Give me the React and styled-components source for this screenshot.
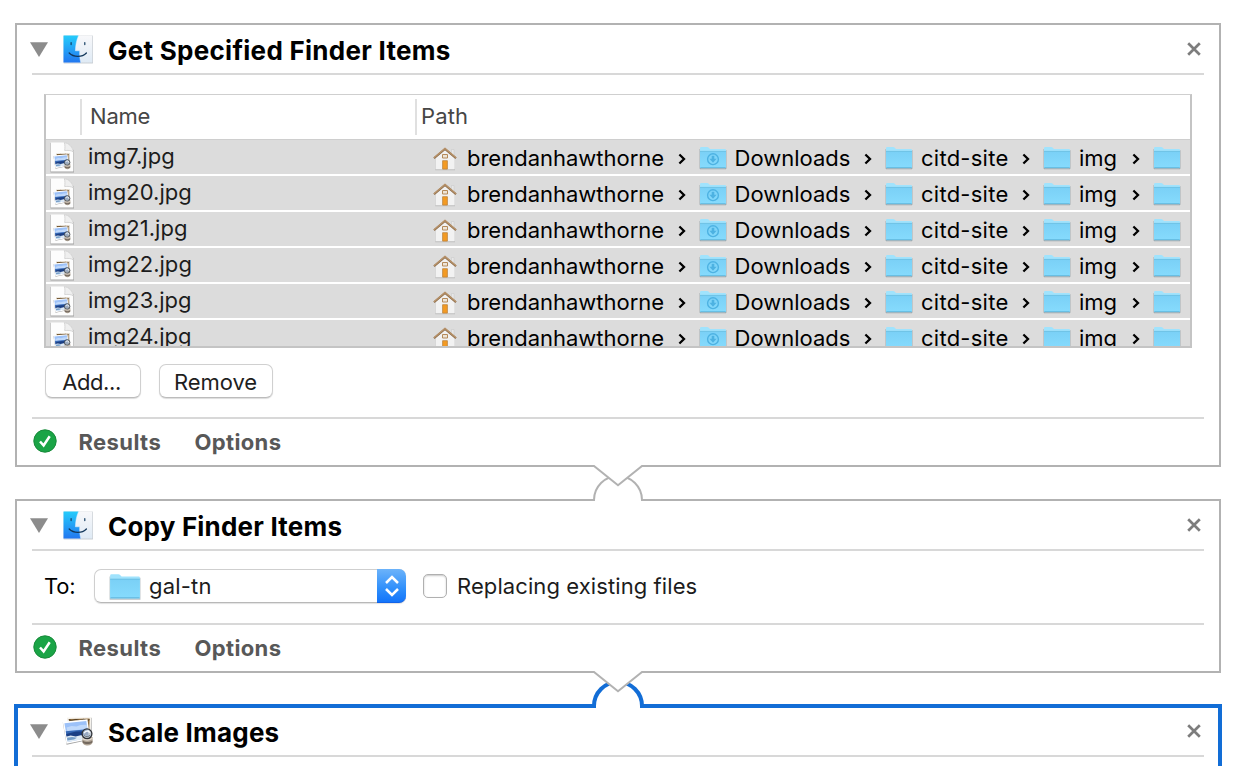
import React from "react";
import styled, { createGlobalStyle } from "styled-components";

const GlobalStyle = createGlobalStyle`
  * { box-sizing: border-box; }
  body {
    margin: 0;
    background: #fff;
    overflow: hidden;
    font-family: Inter, "Liberation Sans", sans-serif;
    font-size: 22px;
    color: #000;
  }
`;

const Workflow = styled.main`
  width: 1236px;
  height: 766px;
  overflow: hidden;
  padding: 23px 15px 0;
  display: flex;
  flex-direction: column;
  gap: 32px;
`;

const Card = styled.section`
  position: relative;
  flex: none;
  height: ${(p) => p.$height}px;
  background: #fff;
  border: ${(p) => (p.$selected ? "4px solid #126dd6" : "2px solid #b2b2b2")};
  margin: ${(p) => (p.$selected ? "-1px -1px 0" : "0")};
  padding: 0 ${(p) => (p.$selected ? 14 : 15)}px;
  display: flex;
  flex-direction: column;
`;

const Header = styled.header`
  flex: none;
  height: ${(p) => (p.$selected ? 49 : 50)}px;
  border-bottom: 2px solid #d8d8d8;
  display: flex;
  align-items: flex-start;
  padding: ${(p) => (p.$selected ? 9 : 10)}px 3px 0 0;
`;

const Disclosure = styled.svg`
  flex: none;
  width: 19px;
  height: 16px;
  margin: 7px 13px 0 -2px;
`;

const HeaderIcon = styled.svg`
  flex: none;
  width: 32px;
  height: 30px;
  overflow: visible;
`;

const Title = styled.h2`
  flex: 1;
  margin: 0 0 0 14px;
  font-size: 26px;
  font-weight: 700;
  line-height: 32px;
  letter-spacing: ${(p) => p.$spacing}px;
  white-space: nowrap;
`;

const CloseIcon = styled.svg`
  flex: none;
  width: 14px;
  height: 14px;
  margin-top: 7px;
`;

const Table = styled.div`
  flex: none;
  width: 1148px;
  height: 254px;
  margin: 19px 0 0 12px;
  border: 2px solid #c4c4c4;
  border-top: 1px solid #cfcfcf;
  overflow: hidden;
`;

const TableHead = styled.div`
  height: 45px;
  border-bottom: 1px solid #cecece;
  padding-top: 4px;
  display: grid;
  grid-template-columns: 34px 335px 1fr;
`;

const HeadCell = styled.div`
  height: 36px;
  line-height: 35px;
  padding-left: ${(p) => p.$inset}px;
  color: #464646;
  letter-spacing: ${(p) => p.$spacing}px;
  border-left: ${(p) => (p.$divided ? "2px solid #e0e0e0" : "none")};
`;

const Row = styled.div`
  height: 36px;
  background: #dcdcdc;
  border-bottom: 2px solid #fff;
  display: grid;
  grid-template-columns: 42px 345px 1fr;
`;

const FileIcon = styled.svg`
  width: 26px;
  height: 32px;
  margin: 1px 0 0 3px;
  overflow: visible;
`;

const FileName = styled.span`
  line-height: 33px;
  color: #1c1c1c;
  letter-spacing: 0.04px;
`;

const Path = styled.div`
  display: grid;
  grid-template-columns: 266px 186px 158px 110px 37px;
  overflow: hidden;
`;

const Segment = styled.div`
  display: flex;
  align-items: flex-start;
  padding-right: ${(p) => (p.$last ? 0 : 13)}px;
`;

const SegmentIcon = styled.svg`
  flex: none;
  width: 28px;
  height: 26px;
  margin-top: 6px;
  overflow: visible;
`;

const SegmentName = styled.span`
  margin-left: ${(p) => p.$gap}px;
  line-height: 37px;
  white-space: nowrap;
  letter-spacing: ${(p) => p.$spacing}px;
`;

const Chevron = styled.svg`
  flex: none;
  width: 8px;
  height: 12px;
  margin: 13px 0 0 auto;
`;

const Buttons = styled.div`
  display: flex;
  gap: 18px;
  margin: 16px 0 0 13px;
`;

const Button = styled.button`
  width: ${(p) => p.$width}px;
  height: 34px;
  padding: 0 ${(p) => p.$trim || 0}px 0 0;
  border: 1px solid #d0d0d0;
  border-bottom-color: #bcbcbc;
  border-radius: 7px;
  background: #fff;
  box-shadow: 0 1px 1px rgba(0, 0, 0, 0.14);
  font: inherit;
  line-height: 34px;
  color: #1e1e1e;
  letter-spacing: ${(p) => p.$spacing}px;
`;

const Footer = styled.footer`
  flex: none;
  height: 48px;
  margin-top: auto;
  border-top: 2px solid #d8d8d8;
  display: flex;
  align-items: flex-start;
  padding: 10px 0 0 1px;
`;

const Check = styled.svg`
  flex: none;
  width: 24px;
  height: 24px;
`;

const FooterTab = styled.span`
  width: ${(p) => p.$width}px;
  margin-left: ${(p) => p.$gap}px;
  line-height: 27px;
  font-weight: 700;
  color: #585858;
  letter-spacing: ${(p) => p.$spacing}px;
`;

const Settings = styled.div`
  display: flex;
  align-items: center;
  height: 34px;
  margin: 18px 0 0 12px;
`;

const Label = styled.label`
  width: ${(p) => p.$width}px;
  line-height: 34px;
  color: ${(p) => p.$color};
  letter-spacing: ${(p) => p.$spacing}px;
  white-space: nowrap;
`;

const Select = styled.div`
  width: 312px;
  height: 34px;
  border: 1px solid #cfcfcf;
  border-right: 0;
  border-bottom-color: #b8b8b8;
  border-radius: 7px;
  box-shadow: 0 1px 1px rgba(0, 0, 0, 0.12);
  display: flex;
  align-items: center;
  padding-left: 14px;
`;

const SelectFolder = styled.svg`
  width: 32px;
  height: 27px;
  overflow: visible;
`;

const SelectValue = styled.span`
  flex: 1;
  margin-left: 8px;
  color: #1c1c1c;
  letter-spacing: 0.2px;
`;

const Stepper = styled.div`
  width: 29px;
  height: 34px;
  border-radius: 0 7px 7px 0;
  background: linear-gradient(#6cb3fa, #2f8ffb 60%, #1374fa);
  border-bottom: 1px solid #1263e8;
  display: flex;
  align-items: center;
  justify-content: center;
`;

const Checkbox = styled.span`
  width: 24px;
  height: 24px;
  margin: 0 10px 0 17px;
  border: 1px solid #b0b0b0;
  border-radius: 5px;
  box-shadow: inset 0 1px 2px rgba(0, 0, 0, 0.22);
`;

const Connector = styled.svg`
  position: absolute;
  z-index: 1;
  left: 575px;
  bottom: -40px;
  width: 52px;
  height: 46px;
`;

function FinderIcon() {
  return (
    <HeaderIcon viewBox="0 0 32 30">
      <defs>
        <linearGradient id="finderBlue" x1="0" y1="0" x2="0" y2="1">
          <stop offset="0" stopColor="#25ccfb" />
          <stop offset="1" stopColor="#2277f0" />
        </linearGradient>
        <linearGradient id="finderPale" x1="0" y1="0" x2="0" y2="1">
          <stop offset="0" stopColor="#f8f8fa" />
          <stop offset="1" stopColor="#dfeaf5" />
        </linearGradient>
      </defs>
      <rect x="1.6" y=".6" width="29.4" height="28" rx=".7" fill="#b4bac2" opacity=".7" />
      <rect x="1.5" y=".4" width="28.8" height="27.2" rx=".6" fill="url(#finderPale)" />
      <path d="M1.5 .4H16.6C14.4 5.6 13.6 10 13.4 15.8H17.7C17.5 20 17.8 23.8 18.8 27.6H1.5Z" fill="url(#finderBlue)" />
      <path d="M16.6 .4C14.4 5.6 13.6 10 13.4 15.8H17.7C17.5 20 17.8 23.8 18.8 27.6" fill="none" stroke="#e4f2ff" strokeWidth=".7" opacity=".7" />
      <path d="M9.1 7.6V9.6M22.8 7.6V9.6" stroke="#123c60" strokeWidth="1.2" strokeLinecap="round" />
      <path d="M7.2 18C11.6 22.4 20 22.6 24.4 18" fill="none" stroke="#123659" strokeWidth="1.3" strokeLinecap="round" />
    </HeaderIcon>
  );
}

function Photos() {
  return (
    <g>
      <path d="M5.500 1.200L29.800 .8V19L8 21Z" fill="#777" opacity=".5" />
      <path d="M5.200 .6L29.200 .2 28.600 18 7 20Z" fill="#f7f4ee" />
      <path d="M6.800 2L27.600 1.600 27.200 17H8Z" fill="#94703f" />
      <path d="M6.800 2.700l3 .8 4-1 4 1 4-1.200 3 1.200 2.800-.8" stroke="#4e3b22" strokeWidth="1" fill="none" />
      <path d="M.8 5.600L25.800 3 28.600 22.500 4.600 27.800Z" fill="#555" opacity=".55" />
      <path d="M.8 4.700L25.500 2.300 28.200 22 4.500 26.800Z" fill="#fff" />
      <path d="M2.400 6.200L24.300 4 26.700 20.700 5.800 24.900Z" fill="#9cc1f8" />
      <path d="M4.500 10.500l5-1.600 5 .7 4-1.600 6.300-.2.600 4-20 2.200Z" fill="#c0d9fb" />
      <path d="M3.700 14.200L25.600 12.200 26.200 17 4.600 19Z" fill="#3668b4" />
      <path d="M4.100 17L14 14.600l11.900-.4.800 5-21.800 1.300Z" fill="#1b3f84" />
      <path d="M4.700 19.500l4-1.100 5 1.100 5-1.200 7.600.4.400 2.200L5.800 24.900Z" fill="#e0ebf4" />
      <path d="M5 20.800l5-.8 5 .7-3 1.700-6.600 1Z" fill="#779fc9" />
      <path d="M20.400 20H30.600V24.500c0 2.600-2.300 4-5 4s-5.200-1.200-5.200-4Z" fill="#b0a495" />
      <path d="M20.600 23.500c2.500 2 7.300 2 9.800 0V25.500c-3 2-7.300 2-9.800 0Z" fill="#74695f" />
      <circle cx="25" cy="16.800" r="4.900" fill="#b9c6d3" fillOpacity=".8" stroke="#303338" strokeWidth="1.300" />
      <path d="M22.200 16.300c1-2.700 4.200-3 5.600-.7" stroke="#f8fbfd" fill="none" strokeWidth="1.400" />
      <path d="M22.100 18.500c2 1.700 4.100 1.600 6-.2" stroke="#66717c" fill="none" />
      <path d="M20.500 21.500c2.200 2 7.600 2.200 9.900-.3" stroke="#e2dbd2" fill="none" strokeWidth="1.200" />
    </g>
  );
}

function ImageFile() {
  return (
    <FileIcon viewBox="0 0 26 32">
      <path d="M1.500 2H16.800L25 9.800V31.600H1.500Z" fill="#8f8f8f" opacity=".75" />
      <path d="M1.800 1.600H16c4 1 8 5 8.400 9V30.400H1.800Z" fill="#fdfdfd" />
      <path d="M15.300 1.600c.9 2.500.6 5.300.4 8 2.800-.4 6.300-.4 8.700 1.400C23.600 6 20 2.200 15.300 1.600Z" fill="#efefef" stroke="#c9c9c9" strokeWidth=".7" />
      <g transform="translate(3.900 11.900) scale(.57)">
        <Photos />
      </g>
    </FileIcon>
  );
}

function FolderShape({ downloads }) {
  return (
    <g>
      <defs>
        <linearGradient id="folderFront" x1="0" y1="0" x2="0" y2="1">
          <stop offset="0" stopColor="#7ad0f6" />
          <stop offset="1" stopColor="#86dbfd" />
        </linearGradient>
      </defs>
      <path d="M1 3V22.800H27V4.200" fill="none" stroke="#72818a" opacity=".5" />
      <path d="M1 2.200Q1 1 2.200 1H8.300Q9 1 9.500 1.600L11 3H26Q27 3 27 4.200V22H1Z" fill="#a0e3fd" />
      <path d="M1 5.200H27V21.200Q27 22 26.200 22H1.800Q1 22 1 21.200Z" fill="url(#folderFront)" />
      <path d="M1 5.400H27" stroke="#68bde0" strokeWidth=".8" />
      <path d="M1.300 21.800H26.700" stroke="#52a9d1" strokeWidth=".8" />
      {downloads && (
        <g fill="none" stroke="#4db2e2">
          <circle cx="14" cy="13.200" r="5.400" strokeWidth="1.400" />
          <path d="M14 9.800v4" strokeWidth="2.600" />
          <path d="M10.400 12.800H17.600L14 16.800Z" fill="#4db2e2" stroke="none" />
        </g>
      )}
    </g>
  );
}

function House() {
  return (
    <SegmentIcon viewBox="0 0 28 26">
      <path d="M18.500 3.500h2.500v6h-2.500Z" fill="#e7e7e7" stroke="#c6c6c6" strokeWidth=".5" />
      <path d="M2.300 12L12 3.500 22 12V24.300H2.300Z" fill="#a0a0a0" opacity=".5" />
      <path d="M2.600 11.500L12 3.500 21.700 11.500V23.300H2.600Z" fill="#f2f2f2" />
      <path d="M1 12.300L12 3 23 12.300" fill="none" stroke="#8b6b49" strokeWidth="2" />
      <path d="M1 11.700L12 2.400 23 11.700" fill="none" stroke="#b8936a" strokeWidth="1.300" />
      <path d="M9.500 8.500h5v3.500h-5Z" fill="#eee5d8" stroke="#b58a5a" />
      <path d="M9.600 14.700h4.800v8.400H9.600Z" fill="#f39a22" stroke="#bd8440" strokeWidth=".8" />
    </SegmentIcon>
  );
}

const Folder = ({ downloads }) => (
  <SegmentIcon viewBox="0 0 28 26">
    <FolderShape downloads={downloads} />
  </SegmentIcon>
);

const Arrow = () => (
  <Chevron viewBox="0 0 8 12">
    <path d="M1.400 1.500L6 6 1.400 10.500" fill="none" stroke="#000" strokeWidth="2.300" />
  </Chevron>
);

function FileRow({ name }) {
  return (
    <Row>
      <ImageFile />
      <FileName>{name}</FileName>
      <Path>
        <Segment>
          <House />
          <SegmentName $gap={6} $spacing={-0.01}>brendanhawthorne</SegmentName>
          <Arrow />
        </Segment>
        <Segment>
          <Folder downloads />
          <SegmentName $gap={7.5} $spacing={0}>Downloads</SegmentName>
          <Arrow />
        </Segment>
        <Segment>
          <Folder />
          <SegmentName $gap={8} $spacing={0.25}>citd-site</SegmentName>
          <Arrow />
        </Segment>
        <Segment>
          <Folder />
          <SegmentName $gap={8} $spacing={0}>img</SegmentName>
          <Arrow />
        </Segment>
        <Segment $last>
          <Folder />
        </Segment>
      </Path>
    </Row>
  );
}

function ActionHeader({ icon, title, spacing, selected }) {
  return (
    <Header $selected={selected}>
      <Disclosure viewBox="0 0 19 16">
        <path d="M0 .3H18L9 15Z" fill="#8c8c8c" />
      </Disclosure>
      {icon}
      <Title $spacing={spacing}>{title}</Title>
      <CloseIcon viewBox="0 0 14 14">
        <path d="M1.200 1.200L12.800 12.800M12.800 1.200L1.200 12.800" stroke="#7d7d7d" strokeWidth="2.700" />
      </CloseIcon>
    </Header>
  );
}

function ActionFooter() {
  return (
    <Footer>
      <Check viewBox="0 0 24 24">
        <circle cx="12" cy="12" r="11.200" fill="#1aa446" stroke="#198a3b" />
        <path d="M7 12.500L10.600 16.400 16.700 7.200" fill="none" stroke="#fff" strokeWidth="2.500" />
      </Check>
      <FooterTab $gap={21.5} $width={96} $spacing={0.4}>Results</FooterTab>
      <FooterTab $gap={20} $width={96} $spacing={0.35}>Options</FooterTab>
    </Footer>
  );
}

function Joint({ selected }) {
  return (
    <Connector viewBox="0 0 52 46">
      <path d={selected ? "M3 38H49V44H3Z" : "M3 39H49V43H3Z"} fill="#fff" />
      <path
        d="M0 41H2A24 24 0 0 1 50 41H52"
        fill="none"
        stroke={selected ? "#126dd6" : "#b2b2b2"}
        strokeWidth={selected ? 4 : 2}
      />
      <path d="M2 5H50V7L26 26.200 2 7Z" fill="#fff" />
      <path d="M0 7H2L26 26.200 50 7H52" fill="none" stroke="#b2b2b2" strokeWidth="2" />
    </Connector>
  );
}

const files = ["img7.jpg", "img20.jpg", "img21.jpg", "img22.jpg", "img23.jpg", "img24.jpg"];

export default function App() {
  return (
    <Workflow>
      <GlobalStyle />
      <Card $height={444}>
        <ActionHeader icon={<FinderIcon />} title="Get Specified Finder Items" spacing={0.28} />
        <Table>
          <TableHead>
            <HeadCell />
            <HeadCell $divided $inset={8} $spacing={-0.2}>Name</HeadCell>
            <HeadCell $divided $inset={4} $spacing={0.15}>Path</HeadCell>
          </TableHead>
          {files.map((name) => (
            <FileRow key={name} name={name} />
          ))}
        </Table>
        <Buttons>
          <Button $width={96} $spacing={-0.4} $trim={3}>Add...</Button>
          <Button $width={114} $spacing={-0.05} $trim={1}>Remove</Button>
        </Buttons>
        <ActionFooter />
        <Joint />
      </Card>
      <Card $height={174}>
        <ActionHeader icon={<FinderIcon />} title="Copy Finder Items" spacing={0.2} />
        <Settings>
          <Label $width={50} $color="#000" $spacing={-0.2}>To:</Label>
          <Select>
            <SelectFolder viewBox="0 0 28 23.600" preserveAspectRatio="none">
              <FolderShape />
            </SelectFolder>
            <SelectValue>gal-tn</SelectValue>
            <Stepper>
              <svg width="16" height="22" viewBox="0 0 16 22" fill="none" stroke="#fff" strokeWidth="2.500">
                <path d="M2 8L8 2 14 8M2 14L8 20 14 14" />
              </svg>
            </Stepper>
          </Select>
          <Checkbox />
          <Label $color="#1c1c1c" $spacing={0.09}>Replacing existing files</Label>
        </Settings>
        <ActionFooter />
        <Joint selected />
      </Card>
      <Card $height={80} $selected>
        <ActionHeader
          selected
          icon={<HeaderIcon viewBox="0 0 32 30"><Photos /></HeaderIcon>}
          title="Scale Images"
          spacing={0.2}
        />
      </Card>
    </Workflow>
  );
}
